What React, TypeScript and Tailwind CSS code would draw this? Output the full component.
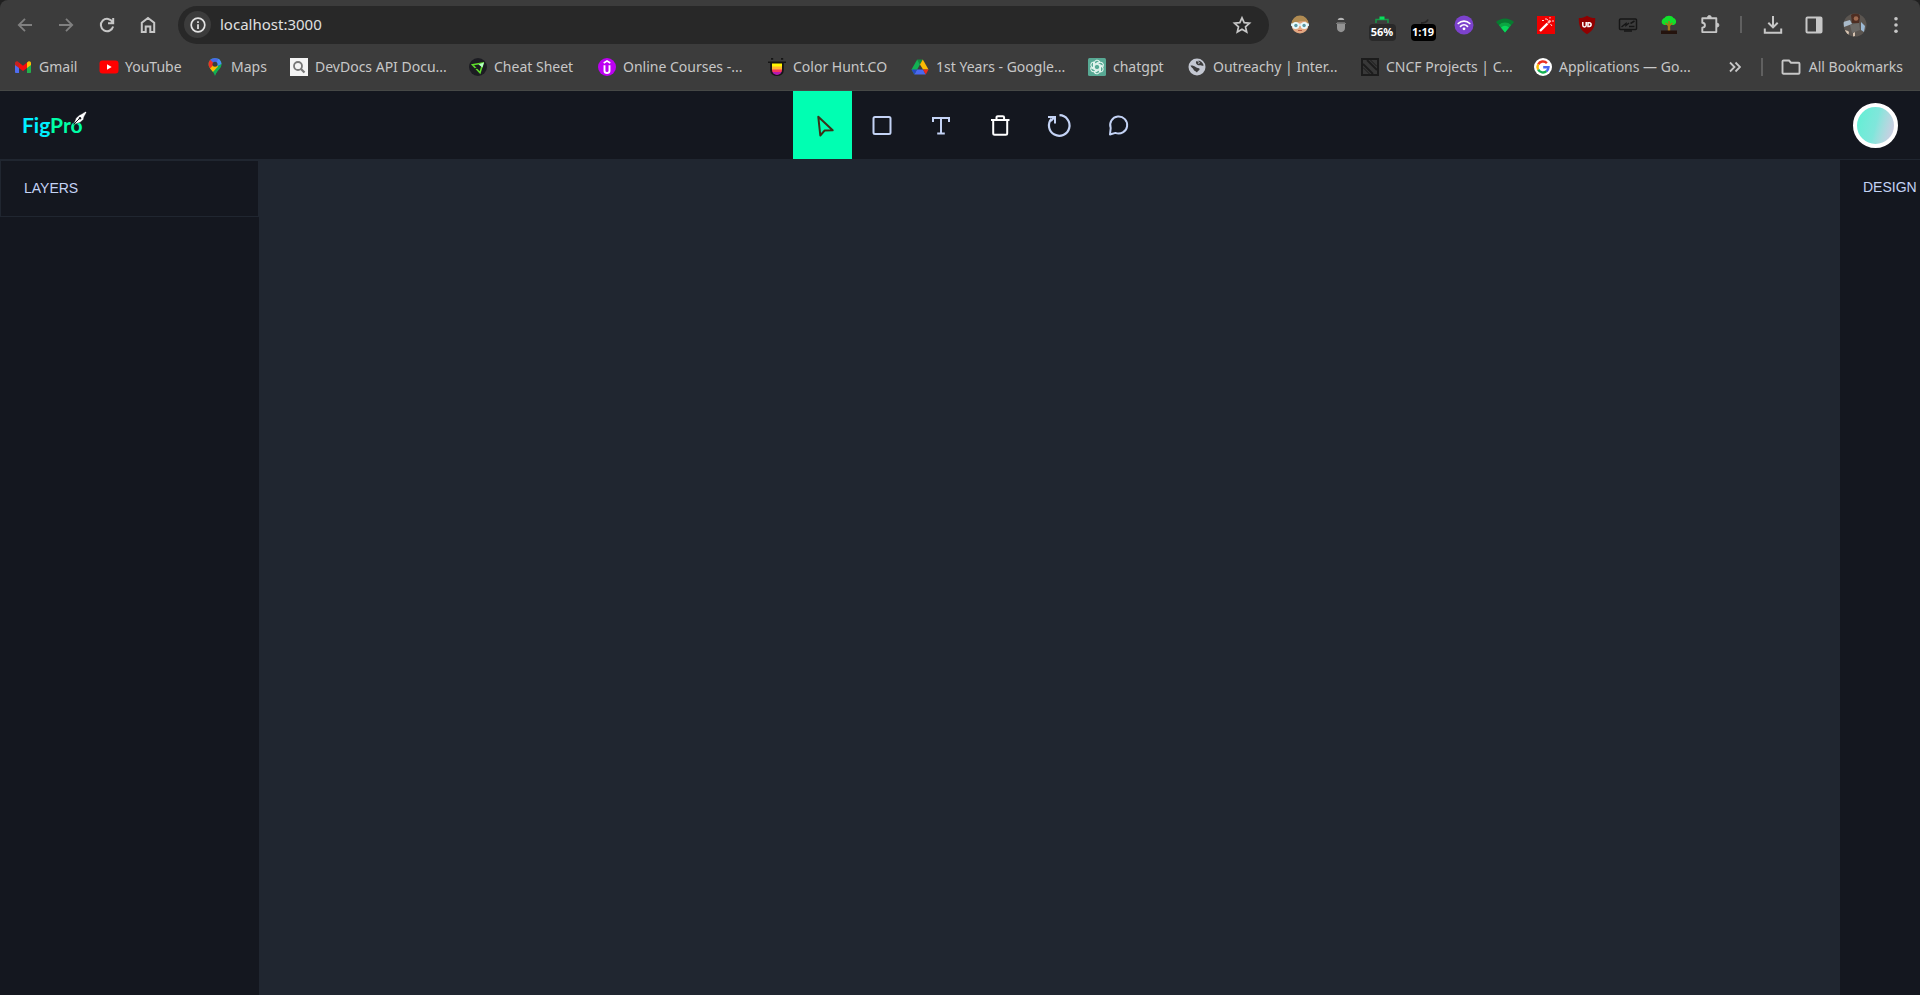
import type { ReactNode } from "react";

const bookmarks: { label: string; width: string; icon: ReactNode }[] = [
  {
    label: "Gmail",
    width: "w-[86px]",
    icon: (
      <svg viewBox="0 0 18 18" className="size-[18px]">
        <path d="M1 6v8.2c0 .5.4.8.8.8H5V7.8z" fill="#4f6df0" />
        <path d="M17 6v8.2c0 .5-.4.8-.8.8H13V7.8z" fill="#22b14c" />
        <path d="M13 4.6l1.3-1c1.1-.9 2.7 0 2.7 1.4v2L13 10z" fill="#fbbc04" />
        <path d="M5 10V4.6l4 3.1 4-3.1V10l-4 3z" fill="#f40d0d" />
        <path d="M1 5.2c0-1.6 1.6-2.500 2.8-1.600L5 4.600V10L1 7z" fill="#c5221f" />
      </svg>
    ),
  },
  {
    label: "YouTube",
    width: "w-[106px]",
    icon: (
      <svg viewBox="0 0 18 18" className="size-[18px] overflow-visible">
        <rect x="-0.5" y="2.5" width="19" height="13" rx="3" fill="#f00" />
        <path d="M7 6.3v5.4L11.7 9z" fill="#fff" />
      </svg>
    ),
  },
  {
    label: "Maps",
    width: "w-[84px]",
    icon: (
      <svg viewBox="0 0 18 18" className="size-[18px]">
        <defs>
          <clipPath id="pin">
            <path d="M9 0C5.3 0 2.5 2.8 2.5 6.3c0 4.7 5 6 6.5 11.7C10.5 12.3 15.5 11 15.5 6.3 15.5 2.8 12.7 0 9 0z" />
          </clipPath>
        </defs>
        <g clipPath="url(#pin)">
          <path d="M0 0h18v18H0z" fill="#12b153" />
          <path d="M3 0h12.5L9 8 4 4z" fill="#4a68e8" />
          <path d="M12.5 0L18 5 9 9z" fill="#4a8df5" />
          <path d="M0 3l4.5-1L9 6.5 4 11 0 9z" fill="#ee3124" />
          <path d="M3 11.5L9 5.5l3 3-6.5 7z" fill="#fbbc04" />
          <path d="M16 5L9 18V13z" fill="#12b153" />
        </g>
        <circle cx="9" cy="6.3" r="2.5" fill="#3c3c3c" />
      </svg>
    ),
  },
  {
    label: "DevDocs API Docu...",
    width: "w-[179px]",
    icon: (
      <svg viewBox="0 0 18 18" className="size-[18px]">
        <rect width="18" height="18" fill="#f3f3f3" />
        <circle cx="8" cy="8" r="4" fill="none" stroke="#777" strokeWidth="1.8" />
        <path d="M11 11l3.5 3.5" stroke="#777" strokeWidth="2.2" />
      </svg>
    ),
  },
  {
    label: "Cheat Sheet",
    width: "w-[129px]",
    icon: (
      <svg viewBox="0 0 18 18" className="size-[18px]">
        <circle cx="9" cy="9" r="9" fill="#1c1c22" />
        <path d="M3.5 6.8L14 5l-3 9.800z" fill="none" stroke="#5edb2b" strokeWidth="1.6" />
        <path d="M6 10.500l4-.5 1-4" fill="none" stroke="#1c1c22" strokeWidth="1.2" />
        <path d="M9.5 6.5L15 4.5l-1.5 5z" fill="#b6ffc4" />
      </svg>
    ),
  },
  {
    label: "Online Courses -...",
    width: "w-[170px]",
    icon: (
      <svg viewBox="0 0 18 18" className="size-[18px]">
        <circle cx="9" cy="9" r="9" fill="#bd00f2" />
        <path d="M5.7 5L9 3l3.3 2" fill="none" stroke="#fff" strokeWidth="1.5" />
        <path d="M6.5 7.200v5.600c0 3 5 3 5 0V7.200" fill="none" stroke="#fff" strokeWidth="1.9" />
      </svg>
    ),
  },
  {
    label: "Color Hunt.CO",
    width: "w-[143px]",
    icon: (
      <svg viewBox="0 0 18 18" className="size-[18px]">
        <defs>
          <clipPath id="tongue">
            <path d="M4 5h10v7a5 5 0 0 1-10 0z" />
          </clipPath>
        </defs>
        <path d="M0 3.5h18V5h-2.2v7.500a6.800 5.500 0 0 1-13.600 0V5H0z" fill="#151515" />
        <path d="M3 0h2.200v1.800H3zM13 0h2.200v1.800H13z" fill="#151515" />
        <g clipPath="url(#tongue)">
          <path d="M4 5.500h10V9H4z" fill="#fff700" />
          <path d="M4 8.500h10V12H4z" fill="#ffb52e" />
          <path d="M4 11.500h10V14H4z" fill="#f8375d" />
          <path d="M4 14h10v4H4z" fill="#b518b0" />
        </g>
      </svg>
    ),
  },
  {
    label: "1st Years - Google...",
    width: "w-[177px]",
    icon: (
      <svg viewBox="0 0 18 18" className="size-[18px]">
        <path d="M6.2 1.5h5.6L9 6.5z" fill="#118a3c" />
        <path d="M6.2 1.5L.5 11.5l2.8 5L9 6.5z" fill="#12b153" />
        <path d="M11.8 1.5L9 6.5l3 5h5.5z" fill="#fbbc04" />
        <path d="M6 11.500h6l2.700 5H3.300z" fill="#4a68f0" />
        <path d="M.5 11.500H6l-2.700 5z" fill="#2747c4" />
        <path d="M12 11.500h5.500l-2.800 5z" fill="#ea2a1c" />
      </svg>
    ),
  },
  {
    label: "chatgpt",
    width: "w-[100px]",
    icon: (
      <svg viewBox="0 0 18 18" className="size-[18px]">
        <rect width="18" height="18" rx="1.5" fill="#58a994" />
        <g fill="none" stroke="#e4f5ef" strokeWidth="1.1" strokeLinejoin="round">
          <path id="petal" d="M6.300 10.500V5a2.900 2.900 0 0 1 5.300-1.500L6.800 6.300" />
          <path d="M6.300 10.500V5a2.900 2.900 0 0 1 5.300-1.500L6.800 6.300" transform="rotate(60 9 9)" />
          <path d="M6.300 10.500V5a2.900 2.900 0 0 1 5.300-1.500L6.800 6.300" transform="rotate(120 9 9)" />
          <path d="M6.300 10.500V5a2.900 2.900 0 0 1 5.300-1.500L6.800 6.300" transform="rotate(180 9 9)" />
          <path d="M6.300 10.500V5a2.900 2.900 0 0 1 5.300-1.500L6.800 6.300" transform="rotate(240 9 9)" />
          <path d="M6.300 10.500V5a2.900 2.900 0 0 1 5.300-1.500L6.800 6.300" transform="rotate(300 9 9)" />
        </g>
      </svg>
    ),
  },
  {
    label: "Outreachy | Inter...",
    width: "w-[173px]",
    icon: (
      <svg viewBox="0 0 18 18" className="size-[18px]">
        <circle cx="9" cy="9" r="8.5" fill="#c3c7d1" />
        <path d="M2.5 7.500c3 0 4 .5 5.500 1.700 1.200 1 3 .2 3.500 1.600.5 1.700-1.500 1.700-2.500 3.700-1-1.500-3-1.300-3.500-3C5 10 3 9.500 2.500 7.500z" fill="#3c3c3c" />
        <path d="M8 3.500c2-1.200 4.500-.8 6 1 1.200 1.300 1.600 2.300 1.500 3.200-1.500.6-2.300-.7-3.700-.5C10 7.500 7.500 6.500 8 3.500z" fill="#3c3c3c" />
        <path d="M9.500 3.300l2 1.300-1 1.200" fill="none" stroke="#c3c7d1" />
      </svg>
    ),
  },
  {
    label: "CNCF Projects | C...",
    width: "w-[173px]",
    icon: (
      <svg viewBox="0 0 18 18" className="size-[18px]">
        <rect width="18" height="18" fill="#1c1c1c" />
        <rect x="2" y="2" width="14" height="14" fill="#383838" />
        <path d="M2 6l10 10M6 2l10 10" stroke="#1c1c1c" strokeWidth="1.8" />
        <path d="M2 9.5L8.5 16M9.5 2L16 8.5" stroke="#1c1c1c" strokeWidth="1" />
      </svg>
    ),
  },
  {
    label: "Applications — Go...",
    width: "w-[160px]",
    icon: (
      <svg viewBox="0 0 18 18" className="size-[18px]">
        <circle cx="9" cy="9" r="9" fill="#fff" />
        <g fill="none" strokeWidth="2.4">
          <path d="M12.9 5.1A5.500 5.500 0 0 0 4.200 6.300" stroke="#ea3323" />
          <path d="M4.200 6.300a5.500 5.500 0 0 0 0 5.400" stroke="#fbbc04" />
          <path d="M4.200 11.700a5.500 5.500 0 0 0 8.300 1.500" stroke="#12b153" />
          <path d="M12.500 13.200A5.500 5.500 0 0 0 14.500 9.200H9.200" stroke="#4a68f0" />
        </g>
      </svg>
    ),
  },
];

const extensions: { name: string; icon: ReactNode }[] = [
  {
    name: "Reader",
    icon: (
      <svg viewBox="0 0 20 20" className="size-5">
        <circle cx="10" cy="10" r="8.5" fill="#e3a781" />
        <path d="M1.500 9a8.500 8.500 0 0 1 17 0l-3-3-6 .5z" fill="#b08b52" />
        <path d="M1 8.500h18v2.500H1z" fill="#cfe9ee" />
        <circle cx="5.700" cy="10.500" r="3.600" fill="#e8fafd" />
        <circle cx="14.300" cy="10.500" r="3.600" fill="#e8fafd" />
        <circle cx="5.900" cy="10.500" r="1.700" fill="#5b98a3" />
        <circle cx="14.100" cy="10.500" r="1.700" fill="#5b98a3" />
        <path d="M8 15.500h4" stroke="#b5583f" />
      </svg>
    ),
  },
  {
    name: "Incognito",
    icon: (
      <svg viewBox="0 0 20 20" className="size-5">
        <path d="M6.600 5a3.500 3 0 0 1 6.800 0z" fill="#b5b5b5" />
        <path d="M6 7.500h8v5.500c0 5.500-8 5.500-8 0z" fill="#939393" />
        <path d="M5 8.500h10" stroke="#777" />
      </svg>
    ),
  },
  {
    name: "Battery",
    icon: (
      <span className="relative block size-5">
        <svg viewBox="0 0 20 20" className="size-5">
          <path d="M4 8V4.500h12V8" fill="none" stroke="#159b48" strokeWidth="1.5" />
          <path d="M7.500 1.500h5v3h-5z" fill="#08e05c" />
        </svg>
        <span className="absolute top-[9px] -left-[3px] flex h-[17px] w-[27px] items-center justify-center rounded bg-[#292929] text-[11px] font-bold text-white">
          56%
        </span>
      </span>
    ),
  },
  {
    name: "Timer",
    icon: (
      <span className="relative block size-5">
        <svg viewBox="0 0 20 20" className="size-5">
          <path d="M8 8c4 0 6-1 7-3.500" fill="none" stroke="#252525" strokeWidth="1.8" />
        </svg>
        <span className="absolute top-[9px] -left-[2px] flex h-[17px] w-[25px] items-center justify-center rounded bg-black text-[11px] font-bold text-white">
          1:19
        </span>
      </span>
    ),
  },
  {
    name: "Podcast",
    icon: (
      <svg viewBox="0 0 20 20" className="size-5">
        <circle cx="10" cy="10" r="9.5" fill="#7c42cd" />
        <g fill="none" stroke="#fff" strokeWidth="1.7" strokeLinecap="round">
          <path d="M4.200 8.500a8.200 8.200 0 0 1 11.600 0M6.500 11.300a5 5 0 0 1 7 0" />
        </g>
        <circle cx="10" cy="13.800" r="1.400" fill="#fff" />
      </svg>
    ),
  },
  {
    name: "Connection",
    icon: (
      <svg viewBox="0 0 20 20" className="size-5">
        <path d="M1 7a13 13 0 0 1 18 0l-9 10.500z" fill="#087a30" />
        <path d="M3.800 10a9 9 0 0 1 12.400 0L10 17.500z" fill="#0ca542" />
        <path d="M6 12.500a5.500 5.500 0 0 1 8 0l-4 5z" fill="#08d95a" />
      </svg>
    ),
  },
  {
    name: "Magic",
    icon: (
      <svg viewBox="0 0 20 20" className="size-5">
        <rect x="1" y="1" width="18" height="18" fill="#f00000" />
        <path d="M4 16l7.500-7.500" stroke="#fff" strokeWidth="2.4" />
        <path d="M12 8l2.500-2.500" stroke="#ffb9b9" strokeWidth="2.4" />
        <path d="M10 3v2M8 5.500H6M14 3.500V2M16 6h2M14.500 9l1.500 2M11 4l1 1.500" stroke="#ffd4d4" strokeWidth="1" />
      </svg>
    ),
  },
  {
    name: "Shield",
    icon: (
      <svg viewBox="0 0 20 20" className="size-5">
        <path d="M10 .8C7.500 2.500 5 3 1.800 3.100 1.800 10 2.500 15 10 19.200 17.500 15 18.200 10 18.200 3.100 15 3 12.500 2.500 10 .8z" fill="#900000" />
        <path d="M5.800 7v3.200a1.700 1.700 0 0 0 3.400 0V7" fill="none" stroke="#fff" strokeWidth="1.5" />
        <path d="M11 7.700h1.200a1.900 1.900 0 0 1 0 3.800H11z" fill="none" stroke="#fff" strokeWidth="1.5" />
      </svg>
    ),
  },
  {
    name: "Screen",
    icon: (
      <svg viewBox="0 0 20 20" className="size-5">
        <rect x="1.500" y="4" width="17" height="10.500" rx="1" fill="#3c3c3c" stroke="#161616" strokeWidth="1.5" />
        <path d="M3.500 12l4.500-3.500v2L11 8M11 11.500h5.500M16.500 6l-4 2.500" fill="none" stroke="#161616" strokeWidth="1.5" />
        <path d="M6 16h8" stroke="#161616" strokeWidth="1.5" />
      </svg>
    ),
  },
  {
    name: "Tree",
    icon: (
      <svg viewBox="0 0 20 20" className="size-5">
        <path d="M5.500 3C7 0 13 0 14.500 3c3.500 1 3.500 6.500 0 7h-9C1.500 9.500 2 4 5.500 3z" fill="#12e02b" />
        <path d="M10 17V6M10 11L6.500 8M10 11l3.500-3" fill="none" stroke="#a77a18" strokeWidth="1.6" />
        <path d="M8.800 10h2.400v6H8.800z" fill="#a77a18" />
        <path d="M2 15.500h16v3.500H2z" fill="#24130d" />
      </svg>
    ),
  },
];

const TOOL_STROKE = "#c4d3f5";

const tools: { name: string; icon: ReactNode }[] = [
  {
    name: "Select",
    icon: (
      <svg viewBox="0 0 24 24" className="size-6" fill="none" stroke="#3d3018" strokeWidth="2" strokeLinejoin="round">
        <path d="M7.300 3.800l14.400 13.500-8.200.3-4.200 4.900z" />
      </svg>
    ),
  },
  {
    name: "Rectangle",
    icon: (
      <svg viewBox="0 0 24 24" className="size-6" fill="none" stroke={TOOL_STROKE} strokeWidth="2">
        <rect x="3.500" y="4" width="17" height="17" rx="1.5" />
      </svg>
    ),
  },
  {
    name: "Text",
    icon: (
      <svg viewBox="0 0 24 24" className="size-6" fill="none" stroke={TOOL_STROKE} strokeWidth="2">
        <path d="M4 9V5h16v4M12 5v15.500M8.200 20.500h7.600" />
      </svg>
    ),
  },
  {
    name: "Delete",
    icon: (
      <svg viewBox="0 0 24 24" className="size-6" fill="none" stroke="#fff" strokeWidth="2" strokeLinejoin="round">
        <path d="M3 7h18.500M8.500 6.500V4.500c0-.8.500-1.300 1.300-1.300h5c.8 0 1.300.5 1.300 1.300v2M5.200 7v13.200c0 .9.500 1.500 1.500 1.500h11c1 0 1.500-.6 1.500-1.500V7" />
      </svg>
    ),
  },
  {
    name: "Reset",
    icon: (
      <svg viewBox="0 0 24 24" className="size-6 overflow-visible" fill="none" stroke={TOOL_STROKE} strokeWidth="2.200">
        <path d="M12.500 2.200a10.300 10.300 0 1 1-8 3.500" />
        <path d="M1 4h7v6.500" strokeWidth="2" />
        <path d="M7.500 4L3.800 8" />
      </svg>
    ),
  },
  {
    name: "Comments",
    icon: (
      <svg viewBox="0 0 24 24" className="size-6" fill="none" stroke={TOOL_STROKE} strokeWidth="2" strokeLinejoin="round">
        <path d="M4 21.500l.7-6.500a8.500 8.500 0 1 1 4.700 4.900z" />
      </svg>
    ),
  },
];

function IconButton({ name, children }: { name: string; children: ReactNode }) {
  return (
    <button type="button" aria-label={name} className="flex h-8 w-[41px] shrink-0 items-center justify-center">
      {children}
    </button>
  );
}

function BrowserBar() {
  return (
    <div className="bg-[#202020]">
      <div className="flex h-[91px] flex-col rounded-t-lg border-b border-[#464846] bg-[#3c3c3c] font-['Noto_Sans',sans-serif] text-[#c7c7c7]">
        <div className="flex h-12 items-center pt-px pr-1 pl-1">
          <IconButton name="Back">
            <svg viewBox="0 0 20 20" className="size-5" fill="none" stroke="#808080" strokeWidth="1.8">
              <path d="M17 10H4M10 3.800L3.800 10l6.200 6.200" />
            </svg>
          </IconButton>
          <IconButton name="Forward">
            <svg viewBox="0 0 20 20" className="size-5" fill="none" stroke="#808080" strokeWidth="1.8">
              <path d="M3 10h13M10 3.800l6.200 6.200-6.200 6.200" />
            </svg>
          </IconButton>
          <IconButton name="Reload">
            <svg viewBox="0 0 20 20" className="size-5" fill="none" stroke="currentColor" strokeWidth="2">
              <path d="M15.600 7.200a6.200 6.200 0 1 0 .5 4.300M16.200 3v5.300H11" />
            </svg>
          </IconButton>
          <IconButton name="Home">
            <svg viewBox="0 0 20 20" className="size-5" fill="none" stroke="currentColor" strokeWidth="2">
              <path d="M3.800 17V7.800L10 3l6.200 4.800V17h-3.900v-5.500H7.700V17z" />
            </svg>
          </IconButton>
          <div className="ml-[10px] flex h-[38px] min-w-0 flex-1 items-center rounded-full bg-[#282828] pr-[17px] pl-[6px]">
            <button type="button" aria-label="Site information" className="flex size-[27px] items-center justify-center rounded-full bg-[#3c3c3c] text-[#e3e3e3]">
              <svg viewBox="0 0 16 16" className="size-4" fill="none" stroke="currentColor">
                <circle cx="8" cy="8" r="6.800" strokeWidth="1.7" />
                <path d="M8 7.200V12M8 4.200v1.700" strokeWidth="1.7" />
              </svg>
            </button>
            <input
              aria-label="Address"
              defaultValue="localhost:3000"
              className="ml-[9px] min-w-0 flex-1 bg-transparent text-[15px] text-[#e0e0e0] outline-none"
            />
            <button type="button" aria-label="Bookmark this tab">
              <svg viewBox="0 0 20 20" className="size-5" fill="none" stroke="currentColor" strokeWidth="1.7">
                <path d="M10 2.800l2.200 4.900 5.300.5-4 3.600 1.200 5.300-4.700-2.800-4.700 2.800 1.200-5.300-4-3.600 5.300-.5z" />
              </svg>
            </button>
          </div>
          <div className="ml-[10px] flex items-center">
            {extensions.map((ext) => (
              <IconButton key={ext.name} name={ext.name}>
                {ext.icon}
              </IconButton>
            ))}
            <IconButton name="Extensions">
              <svg viewBox="0 0 20 20" className="size-5" fill="none" stroke="currentColor" strokeWidth="1.9" strokeLinejoin="round">
                <path d="M2.300 3.200h14v13.900h-14v-4.400c3.500-.3 3.500-4.700 0-5z" />
                <path d="M7.500 2.500a1.900 1.900 0 0 1 3.800 0zM17 8.200a1.900 1.900 0 0 1 0 3.800z" fill="currentColor" strokeWidth="1" />
              </svg>
            </IconButton>
            <span className="mx-[10px] h-[17px] w-0.5 bg-[#606060]" />
            <IconButton name="Downloads">
              <svg viewBox="0 0 20 20" className="size-5" fill="none" stroke="currentColor" strokeWidth="2">
                <path d="M10 1v11M5.300 7.700L10 12.400l4.700-4.700M1.800 13.500v4.300h16.400v-4.300" />
              </svg>
            </IconButton>
            <IconButton name="Side panel">
              <svg viewBox="0 0 20 20" className="size-5" fill="none" stroke="currentColor" strokeWidth="2">
                <rect x="2.500" y="2.500" width="15" height="15" rx="1" />
                <path d="M12 2h5.500v16H12z" fill="currentColor" stroke="none" />
              </svg>
            </IconButton>
            <IconButton name="Profile">
              <svg viewBox="0 0 24 24" className="size-6">
                <defs>
                  <clipPath id="profile">
                    <circle cx="12" cy="12" r="11.5" />
                  </clipPath>
                </defs>
                <g clipPath="url(#profile)">
                  <path d="M0 0h24v24H0z" fill="#5b5550" />
                  <path d="M0 9l7-2 2 4-8 3z" fill="#a9bac9" />
                  <path d="M8 2c4-3 9-2 9 2l-1 6H9z" fill="#4e2e23" />
                  <circle cx="13" cy="5.500" r="2.300" fill="#9e6a50" />
                  <path d="M18 9l4 4-1 6-3-2z" fill="#9cb9d4" />
                  <path d="M2 17l3 1 1 1-1 5-2-2z" fill="#d6c3b0" />
                  <path d="M10 20l2-1v4l-2 1z" fill="#d6c3b0" />
                  <path d="M7 12l9-2 1 7-8 3z" fill="#6b6966" />
                </g>
              </svg>
            </IconButton>
            <IconButton name="Menu">
              <svg viewBox="0 0 20 20" className="size-5" fill="currentColor">
                <circle cx="10" cy="3.800" r="1.800" />
                <circle cx="10" cy="10" r="1.800" />
                <circle cx="10" cy="16.200" r="1.800" />
              </svg>
            </IconButton>
          </div>
        </div>

        <div className="flex h-[38px] items-center pr-[17px] pl-[14px] text-sm">
          <nav className="flex min-w-0 flex-1 overflow-hidden">
            {bookmarks.map((item) => (
              <a key={item.label} href="#" className={`flex shrink-0 items-center gap-[7px] whitespace-nowrap ${item.width}`}>
                {item.icon}
                {item.label}
              </a>
            ))}
          </nav>
          <button type="button" aria-label="More bookmarks">
            <svg viewBox="0 0 12 12" className="size-3" fill="none" stroke="currentColor" strokeWidth="1.8">
              <path d="M1 1.500L5.500 6 1 10.500M6.500 1.500L11 6l-4.500 4.500" />
            </svg>
          </button>
          <span className="mr-[18px] ml-5 h-[18px] w-0.5 bg-[#606060]" />
          <a href="#" className="flex items-center gap-2 whitespace-nowrap">
            <svg viewBox="0 0 20 18" className="h-[18px] w-5" fill="none" stroke="currentColor" strokeWidth="1.9">
              <path d="M1.500 3.500c0-.6.300-1 1-1H8l2 2.200h7.500c.6 0 1 .3 1 1v9c0 .6-.4 1-1 1h-15c-.7 0-1-.4-1-1z" />
            </svg>
            All Bookmarks
          </a>
        </div>
      </div>
    </div>
  );
}

function Logo() {
  return (
    <a href="#" aria-label="FigPro" className="relative block w-[65px] font-['Lato',sans-serif] text-[21px] leading-6 font-bold">
      <span className="text-[#00f0ff]">Fig</span>
      <span className="text-[#00ffa6]">Pro</span>
      <svg viewBox="0 0 14 14" className="absolute -top-0.5 right-0 size-[14px]">
        <path d="M.500 13.500L3 7 6.500 4l2-1L12.500.500 13.500 1.500 11 6l-.5 2.500L7 11.500z" fill="#fff" stroke="#14171f" strokeWidth=".5" />
        <path d="M1 13l5.500-5.500" stroke="#14171f" />
        <circle cx="7" cy="7.300" r="1.200" fill="#14171f" />
      </svg>
    </a>
  );
}

function Navbar() {
  return (
    <header className="flex h-[69px] items-center justify-between border-b border-[#202630] bg-[#14171f] px-[22px]">
      <Logo />
      <div className="flex h-full">
        {tools.map((tool, i) => (
          <button
            key={tool.name}
            type="button"
            aria-label={tool.name}
            className={`flex h-full w-[59px] items-center justify-center ${i === 0 ? "bg-[#00ffb2]" : ""}`}
          >
            {tool.icon}
          </button>
        ))}
      </div>
      <button
        type="button"
        aria-label="You"
        className="size-[45px] rounded-full border-4 border-white bg-linear-105 from-[#5df0d4] via-[#80e6db] to-[#d8c8e4]"
      />
    </header>
  );
}

export default function App() {
  return (
    <div className="flex h-screen flex-col overflow-hidden bg-[#202630]">
      <BrowserBar />
      <Navbar />
      <main className="flex min-h-0 flex-1 font-['Liberation_Sans',sans-serif] text-sm leading-[19px] text-[#c4d3f5]">
        <aside className="w-[259px] shrink-0 bg-[#14171f]">
          <h3 className="border border-[#202630] px-[23px] py-[18px]">LAYERS</h3>
        </aside>
        <div className="flex-1" />
        <aside className="w-20 shrink-0 bg-[#14171f]">
          <h3 className="px-[23px] py-[18px]">DESIGN</h3>
        </aside>
      </main>
    </div>
  );
}
